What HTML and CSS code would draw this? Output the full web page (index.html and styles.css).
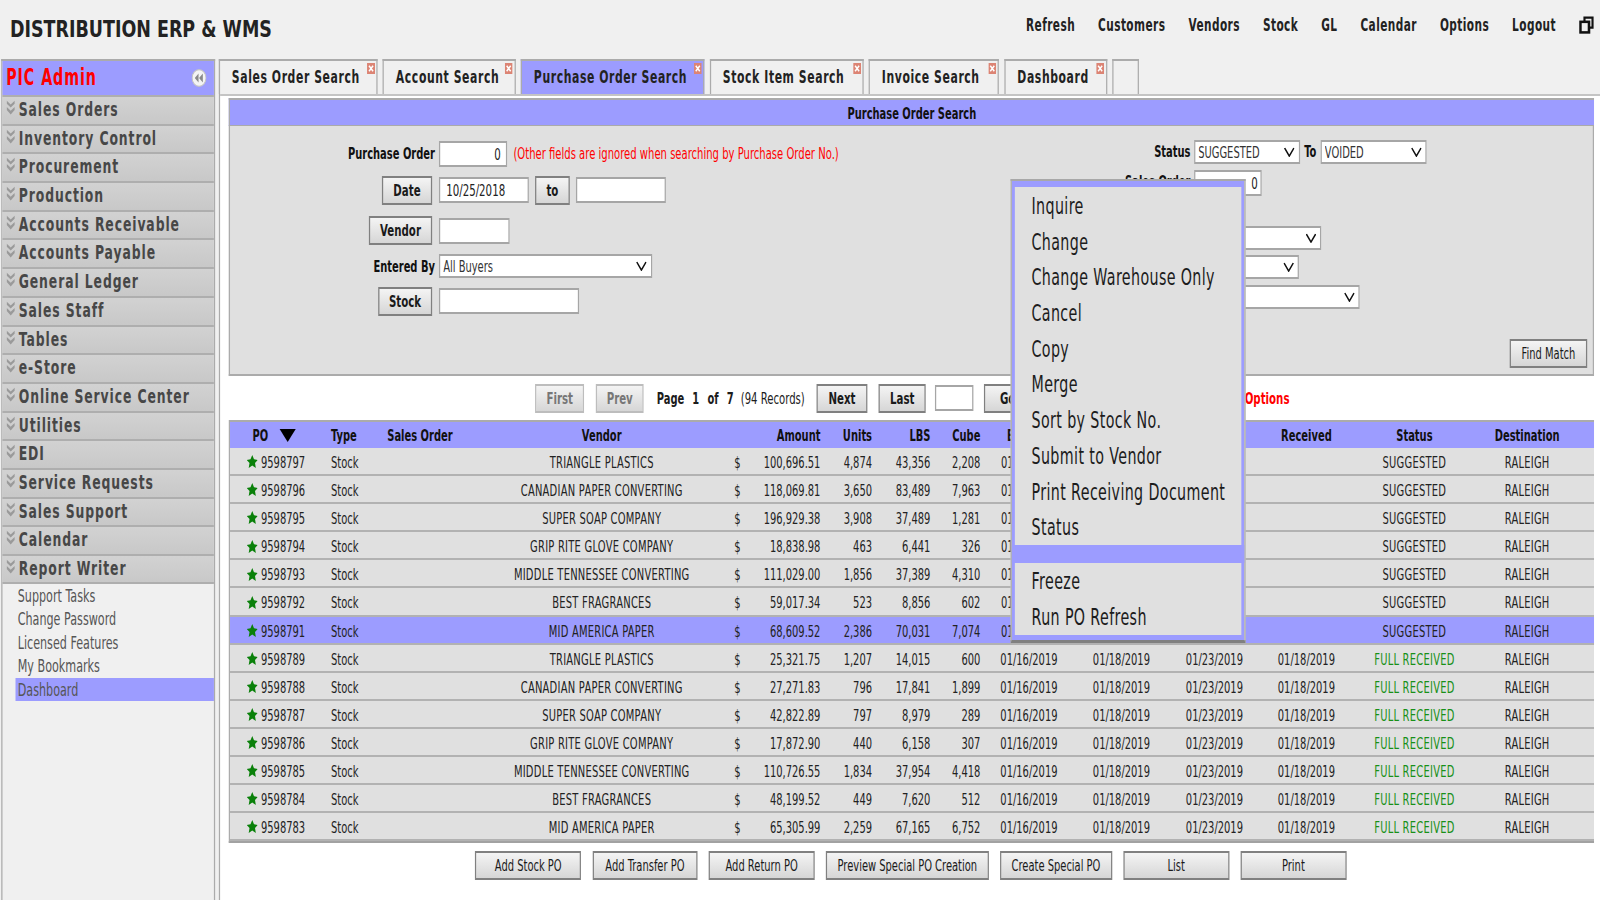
FILE: index.html
```html
<!DOCTYPE html>
<html lang="en">
<head>
<meta charset="utf-8">
<title>Distribution ERP &amp; WMS</title>
<link rel="stylesheet" href="styles.css">
</head>
<body>
<svg class="defs" aria-hidden="true">
  <symbol id="star" viewBox="0 0 20 20" preserveAspectRatio="none"><polygon points="10,0 13.200,6.500 20,7.500 15,12.300 16.500,20 10,16 3.500,20 5,12.300 0,7.500 6.800,6.500" fill="#0a800a"/></symbol>
  <symbol id="chev" viewBox="0 0 16 24" preserveAspectRatio="none"><path d="M1 1l7 6 7-6v5l-7 6-7-6zM1 11l7 6 7-6v5l-7 7-7-7z" fill="#9a9a9a"/></symbol>
  <symbol id="close" viewBox="0 0 16 20" preserveAspectRatio="none"><rect width="16" height="20" fill="#dc8474"/><path d="M4 5l8 10M12 5L4 15" stroke="#fff" stroke-width="3"/></symbol>
</svg>
<div class="frame">
<div class="page">
  <header class="top">
    <div class="brand">DISTRIBUTION ERP &amp; WMS</div>
    <nav class="nav">
      <a>Refresh</a><a>Customers</a><a>Vendors</a><a>Stock</a><a>GL</a><a>Calendar</a><a>Options</a><a>Logout</a>
      <svg class="restore" viewBox="0 0 14 17" preserveAspectRatio="none"><path d="M5 5V1.500h7.500V11H9" fill="none" stroke="#111" stroke-width="2"/><rect x="1.200" y="5.500" width="8" height="10" fill="none" stroke="#111" stroke-width="2.400"/></svg>
    </nav>
  </header>
  <div class="work">
    <aside class="side">
      <div class="side-head"><span class="side-title">PIC Admin</span>
        <svg class="collapse" viewBox="0 0 14 14" preserveAspectRatio="none"><circle cx="7" cy="7" r="6.500" fill="#f4f4f4" stroke="#c4c4c4"/><path d="M6.500 3.500v7L3 7zM10.500 3.500v7L7 7z" fill="#8a8a8a"/></svg>
      </div>
      <div class="sec"><svg class="chev"><use href="#chev"/></svg>Sales Orders</div>
      <div class="sec"><svg class="chev"><use href="#chev"/></svg>Inventory Control</div>
      <div class="sec"><svg class="chev"><use href="#chev"/></svg>Procurement</div>
      <div class="sec"><svg class="chev"><use href="#chev"/></svg>Production</div>
      <div class="sec"><svg class="chev"><use href="#chev"/></svg>Accounts Receivable</div>
      <div class="sec"><svg class="chev"><use href="#chev"/></svg>Accounts Payable</div>
      <div class="sec"><svg class="chev"><use href="#chev"/></svg>General Ledger</div>
      <div class="sec"><svg class="chev"><use href="#chev"/></svg>Sales Staff</div>
      <div class="sec"><svg class="chev"><use href="#chev"/></svg>Tables</div>
      <div class="sec"><svg class="chev"><use href="#chev"/></svg>e-Store</div>
      <div class="sec"><svg class="chev"><use href="#chev"/></svg>Online Service Center</div>
      <div class="sec"><svg class="chev"><use href="#chev"/></svg>Utilities</div>
      <div class="sec"><svg class="chev"><use href="#chev"/></svg>EDI</div>
      <div class="sec"><svg class="chev"><use href="#chev"/></svg>Service Requests</div>
      <div class="sec"><svg class="chev"><use href="#chev"/></svg>Sales Support</div>
      <div class="sec"><svg class="chev"><use href="#chev"/></svg>Calendar</div>
      <div class="sec"><svg class="chev"><use href="#chev"/></svg>Report Writer</div>
      <ul class="sub">
        <li>Support Tasks</li>
        <li>Change Password</li>
        <li>Licensed Features</li>
        <li>My Bookmarks</li>
        <li class="on">Dashboard</li>
      </ul>
    </aside>
    <main class="main">
      <div class="tabs">
        <div class="tab t1">Sales Order Search<svg class="x"><use href="#close"/></svg></div>
        <div class="tab t2">Account Search<svg class="x"><use href="#close"/></svg></div>
        <div class="tab t3 active">Purchase Order Search<svg class="x"><use href="#close"/></svg></div>
        <div class="tab t4">Stock Item Search<svg class="x"><use href="#close"/></svg></div>
        <div class="tab t5">Invoice Search<svg class="x"><use href="#close"/></svg></div>
        <div class="tab t6">Dashboard<svg class="x"><use href="#close"/></svg></div>
        <div class="tab t7"></div>
      </div>
      <section class="panel">
        <h1 class="panel-title">Purchase Order Search</h1>
        <div class="search">
          <div class="f-left">
            <div class="frow r1"><div class="key"><span class="lbl">Purchase Order</span></div><input class="in i-po" value="0"><span class="note">(Other fields are ignored when searching by Purchase Order No.)</span></div>
            <div class="frow r2"><div class="key"><button class="btn b-date">Date</button></div><input class="in i-date" value="10/25/2018"><button class="btn b-to">to</button><input class="in i-date2"></div>
            <div class="frow r3"><div class="key"><button class="btn b-vendor">Vendor</button></div><input class="in i-vendor"></div>
            <div class="frow r4"><div class="key"><span class="lbl">Entered By</span></div><select class="sel s-buyer"><option>All Buyers</option></select></div>
            <div class="frow r5"><div class="key"><button class="btn b-stock">Stock</button></div><input class="in i-stock"></div>
          </div>
          <div class="f-right">
            <div class="grow g1"><span class="rkey">Status</span><select class="sel s-status"><option>SUGGESTED</option></select><span class="to">To</span><select class="sel s-status"><option>VOIDED</option></select></div>
            <div class="grow g2"><span class="rkey">Sales Order</span><input class="in i-so" value="0"></div>
            <div class="grow g3"><span class="rkey"></span><select class="sel s-a"><option></option></select></div>
            <div class="grow g4"><span class="rkey"></span><select class="sel s-b"><option></option></select></div>
            <div class="grow g5"><span class="rkey"></span><select class="sel s-c"><option></option></select></div>
          </div>
          <button class="btn light b-find">Find Match</button>
        </div>
        <div class="pager">
          <button class="btn dis b-first">First</button>
          <button class="btn dis b-prev">Prev</button>
          <span class="pg">Page&nbsp; 1&nbsp; of&nbsp; 7</span>
          <span class="rec">(94 Records)</span>
          <button class="btn b-next">Next</button>
          <button class="btn b-last">Last</button>
          <input class="in i-page">
          <button class="btn b-go">Go</button>
          <span class="opts">Options</span>
        </div>
        <div class="grid">
          <div class="row head">
            <div class="po">PO<span class="sort"></span></div><div class="ty">Type</div><div class="c so">Sales Order</div><div class="c">Vendor</div><div></div><div class="r">Amount</div><div class="r">Units</div><div class="r">LBS</div><div class="r">Cube</div><div class="c dt">Entered</div><div></div><div></div><div class="c dt">Received</div><div class="c">Status</div><div class="c dest">Destination</div>
          </div>
          <div class="row"><div class="po"><svg class="star"><use href="#star"/></svg>9598797</div><div class="ty">Stock</div><div></div><div class="c">TRIANGLE PLASTICS</div><div class="c">$</div><div class="r">100,696.51</div><div class="r">4,874</div><div class="r">43,356</div><div class="r">2,208</div><div class="cut">01</div><div></div><div></div><div></div><div class="c">SUGGESTED</div><div class="c dest">RALEIGH</div></div>
          <div class="row"><div class="po"><svg class="star"><use href="#star"/></svg>9598796</div><div class="ty">Stock</div><div></div><div class="c">CANADIAN PAPER CONVERTING</div><div class="c">$</div><div class="r">118,069.81</div><div class="r">3,650</div><div class="r">83,489</div><div class="r">7,963</div><div class="cut">01</div><div></div><div></div><div></div><div class="c">SUGGESTED</div><div class="c dest">RALEIGH</div></div>
          <div class="row"><div class="po"><svg class="star"><use href="#star"/></svg>9598795</div><div class="ty">Stock</div><div></div><div class="c">SUPER SOAP COMPANY</div><div class="c">$</div><div class="r">196,929.38</div><div class="r">3,908</div><div class="r">37,489</div><div class="r">1,281</div><div class="cut">01</div><div></div><div></div><div></div><div class="c">SUGGESTED</div><div class="c dest">RALEIGH</div></div>
          <div class="row"><div class="po"><svg class="star"><use href="#star"/></svg>9598794</div><div class="ty">Stock</div><div></div><div class="c">GRIP RITE GLOVE COMPANY</div><div class="c">$</div><div class="r">18,838.98</div><div class="r">463</div><div class="r">6,441</div><div class="r">326</div><div class="cut">01</div><div></div><div></div><div></div><div class="c">SUGGESTED</div><div class="c dest">RALEIGH</div></div>
          <div class="row"><div class="po"><svg class="star"><use href="#star"/></svg>9598793</div><div class="ty">Stock</div><div></div><div class="c">MIDDLE TENNESSEE CONVERTING</div><div class="c">$</div><div class="r">111,029.00</div><div class="r">1,856</div><div class="r">37,389</div><div class="r">4,310</div><div class="cut">01</div><div></div><div></div><div></div><div class="c">SUGGESTED</div><div class="c dest">RALEIGH</div></div>
          <div class="row"><div class="po"><svg class="star"><use href="#star"/></svg>9598792</div><div class="ty">Stock</div><div></div><div class="c">BEST FRAGRANCES</div><div class="c">$</div><div class="r">59,017.34</div><div class="r">523</div><div class="r">8,856</div><div class="r">602</div><div class="cut">01</div><div></div><div></div><div></div><div class="c">SUGGESTED</div><div class="c dest">RALEIGH</div></div>
          <div class="row sel-row"><div class="po"><svg class="star"><use href="#star"/></svg>9598791</div><div class="ty">Stock</div><div></div><div class="c">MID AMERICA PAPER</div><div class="c">$</div><div class="r">68,609.52</div><div class="r">2,386</div><div class="r">70,031</div><div class="r">7,074</div><div class="cut">01</div><div></div><div></div><div></div><div class="c">SUGGESTED</div><div class="c dest">RALEIGH</div></div>
          <div class="row"><div class="po"><svg class="star"><use href="#star"/></svg>9598789</div><div class="ty">Stock</div><div></div><div class="c">TRIANGLE PLASTICS</div><div class="c">$</div><div class="r">25,321.75</div><div class="r">1,207</div><div class="r">14,015</div><div class="r">600</div><div class="c dt">01/16/2019</div><div class="c dt">01/18/2019</div><div class="c dt">01/23/2019</div><div class="c dt">01/18/2019</div><div class="c full">FULL RECEIVED</div><div class="c dest">RALEIGH</div></div>
          <div class="row"><div class="po"><svg class="star"><use href="#star"/></svg>9598788</div><div class="ty">Stock</div><div></div><div class="c">CANADIAN PAPER CONVERTING</div><div class="c">$</div><div class="r">27,271.83</div><div class="r">796</div><div class="r">17,841</div><div class="r">1,899</div><div class="c dt">01/16/2019</div><div class="c dt">01/18/2019</div><div class="c dt">01/23/2019</div><div class="c dt">01/18/2019</div><div class="c full">FULL RECEIVED</div><div class="c dest">RALEIGH</div></div>
          <div class="row"><div class="po"><svg class="star"><use href="#star"/></svg>9598787</div><div class="ty">Stock</div><div></div><div class="c">SUPER SOAP COMPANY</div><div class="c">$</div><div class="r">42,822.89</div><div class="r">797</div><div class="r">8,979</div><div class="r">289</div><div class="c dt">01/16/2019</div><div class="c dt">01/18/2019</div><div class="c dt">01/23/2019</div><div class="c dt">01/18/2019</div><div class="c full">FULL RECEIVED</div><div class="c dest">RALEIGH</div></div>
          <div class="row"><div class="po"><svg class="star"><use href="#star"/></svg>9598786</div><div class="ty">Stock</div><div></div><div class="c">GRIP RITE GLOVE COMPANY</div><div class="c">$</div><div class="r">17,872.90</div><div class="r">440</div><div class="r">6,158</div><div class="r">307</div><div class="c dt">01/16/2019</div><div class="c dt">01/18/2019</div><div class="c dt">01/23/2019</div><div class="c dt">01/18/2019</div><div class="c full">FULL RECEIVED</div><div class="c dest">RALEIGH</div></div>
          <div class="row"><div class="po"><svg class="star"><use href="#star"/></svg>9598785</div><div class="ty">Stock</div><div></div><div class="c">MIDDLE TENNESSEE CONVERTING</div><div class="c">$</div><div class="r">110,726.55</div><div class="r">1,834</div><div class="r">37,954</div><div class="r">4,418</div><div class="c dt">01/16/2019</div><div class="c dt">01/18/2019</div><div class="c dt">01/23/2019</div><div class="c dt">01/18/2019</div><div class="c full">FULL RECEIVED</div><div class="c dest">RALEIGH</div></div>
          <div class="row"><div class="po"><svg class="star"><use href="#star"/></svg>9598784</div><div class="ty">Stock</div><div></div><div class="c">BEST FRAGRANCES</div><div class="c">$</div><div class="r">48,199.52</div><div class="r">449</div><div class="r">7,620</div><div class="r">512</div><div class="c dt">01/16/2019</div><div class="c dt">01/18/2019</div><div class="c dt">01/23/2019</div><div class="c dt">01/18/2019</div><div class="c full">FULL RECEIVED</div><div class="c dest">RALEIGH</div></div>
          <div class="row"><div class="po"><svg class="star"><use href="#star"/></svg>9598783</div><div class="ty">Stock</div><div></div><div class="c">MID AMERICA PAPER</div><div class="c">$</div><div class="r">65,305.99</div><div class="r">2,259</div><div class="r">67,165</div><div class="r">6,752</div><div class="c dt">01/16/2019</div><div class="c dt">01/18/2019</div><div class="c dt">01/23/2019</div><div class="c dt">01/18/2019</div><div class="c full">FULL RECEIVED</div><div class="c dest">RALEIGH</div></div>
        </div>
        <div class="actions">
          <button class="btn plain a1">Add Stock PO</button>
          <button class="btn plain a2">Add Transfer PO</button>
          <button class="btn plain a3">Add Return PO</button>
          <button class="btn plain a4">Preview Special PO Creation</button>
          <button class="btn plain a5">Create Special PO</button>
          <button class="btn plain a6">List</button>
          <button class="btn plain a6">Print</button>
        </div>
      </section>
    </main>
  </div>
  <ul class="menu">
    <li>Inquire</li>
    <li>Change</li>
    <li>Change Warehouse Only</li>
    <li>Cancel</li>
    <li>Copy</li>
    <li>Merge</li>
    <li>Sort by Stock No.</li>
    <li>Submit to Vendor</li>
    <li>Print Receiving Document</li>
    <li>Status</li>
    <li class="sep"></li>
    <li class="low">Freeze</li>
    <li class="low">Run PO Refresh</li>
  </ul>
</div>
</div>
</body>
</html>
```

FILE: styles.css
```css
/* The reference is a horizontally squeezed capture. The page is laid out at a wider
   width and compressed once at the root; --u is one final horizontal pixel. */
:root {
  --s: 0.62;
  --u: calc(1px / 0.62);
  --b: calc(1.6 * var(--u));
  --purple: #9c9cff;
  --line: #ababab;
  --panel: #e0e0e0;
  --pale: #f0f0f0;
}
* { box-sizing: border-box; }
html, body { margin: 0; height: 100%; overflow: hidden; background: #fff; }
.defs { display: none; }
.frame { width: 1600px; height: 900px; overflow: hidden; }
.page {
  position: relative;
  width: calc(1600 * var(--u));
  height: 900px;
  transform: scaleX(var(--s));
  transform-origin: 0 0;
  background: var(--pale);
  font-family: "DejaVu Sans", "Liberation Sans", sans-serif;
  font-size: 16px;
  color: #1c1c1c;
  overflow: hidden;
}

/* top bar */
.top { height: 59px; display: flex; justify-content: space-between; padding: 0 calc(6 * var(--u)) 0 calc(10 * var(--u)); }
.brand { font-size: 23.500px; font-weight: 700; line-height: 58px; color: #222; transform: scaleX(1.2); transform-origin: 0 0; white-space: nowrap; }
.nav { display: flex; gap: calc(23 * var(--u)); font-size: 17px; letter-spacing: 0.7px; font-weight: 700; line-height: 50px; color: #222; }
.restore { width: calc(15 * var(--u)); height: 18px; margin-top: 16px; }

/* sidebar */
.work { display: flex; height: 841px; }
.side {
  width: calc(214 * var(--u));
  margin-left: var(--u);
  border-left: var(--b) solid var(--line);
  border-right: var(--b) solid var(--line);
  border-top: 2px solid var(--line);
  flex: none;
}
.side-head {
  height: 34px;
  background: var(--purple);
  display: flex;
  align-items: center;
  justify-content: space-between;
  padding: 0 calc(7 * var(--u)) 2px calc(4 * var(--u));
}
.side-title { color: #f00; font-weight: 700; font-size: 23px; letter-spacing: 1.500px; }
.collapse { width: calc(15 * var(--u)); height: 18px; margin-top: 2px; }
.sec {
  height: 28.700px;
  background: linear-gradient(#d2d2d2, #c8c8c8);
  border-top: 2px solid #aeaeae;
  padding-left: calc(4 * var(--u));
  font-size: 20px;
  letter-spacing: 1.450px;
  font-weight: 700;
  line-height: 25px;
  color: #474747;
  display: flex;
  white-space: nowrap;
}
.chev { width: calc(9 * var(--u)); height: 15px; margin: 3px calc(3.500 * var(--u)) 0 0; flex: none; }
.sub { list-style: none; margin: -1px 0 0; padding: 0 0 0 calc(13 * var(--u)); border-top: 2px solid #aeaeae; color: #555; font-size: 18px; }
.sub li { height: 23.500px; line-height: 23.500px; padding-left: calc(2.500 * var(--u)); }
.sub .on { background: var(--purple); }

/* main + tabs */
.main { flex: 1; margin-left: calc(4 * var(--u)); border-left: var(--b) solid var(--line); background: #fff; min-width: 0; }
.tabs { display: flex; gap: calc(5 * var(--u)); height: 37px; border-bottom: 2px solid #c4c4c4; background: var(--pale); }
.tab {
  position: relative;
  height: 35px;
  border: var(--b) solid var(--line);
  border-width: 2px var(--b) 0;
  padding-left: calc(12 * var(--u));
  font-size: 17.500px;
  letter-spacing: 0.95px;
  font-weight: 700;
  line-height: 33px;
  color: #222;
  white-space: nowrap;
}
.t1 { width: calc(159 * var(--u)); margin-left: calc(-1.600 * var(--u)); }
.t2 { width: calc(133 * var(--u)); }
.t3 { width: calc(184 * var(--u)); }
.t4 { width: calc(154 * var(--u)); }
.t5 { width: calc(130.500 * var(--u)); }
.t6 { width: calc(103 * var(--u)); }
.t7 { width: calc(27 * var(--u)); }
.active { background: var(--purple); }
.x { position: absolute; top: 2px; right: calc(1.500 * var(--u)); width: calc(8 * var(--u)); height: 11px; }

/* panel */
.panel { width: calc(1365 * var(--u)); margin: 2px 0 0 calc(8.500 * var(--u)); }
.panel-title {
  margin: 0;
  height: 28px;
  background: var(--purple);
  border-top: 2px solid var(--line);
  border-left: var(--b) solid var(--line);
  border-bottom: 1px solid #aaa;
  text-align: center;
  font-size: 16px;
  font-weight: 700;
  line-height: 28px;
  color: #111;
}
.search {
  height: 250px;
  display: flex;
  background: var(--panel);
  border: var(--b) solid var(--line);
  border-width: 0 var(--b) 2px;
  padding-top: 15px;
}
.f-left { width: calc(869 * var(--u)); flex: none; }
.frow { display: flex; align-items: flex-start; }
.r1 { height: 35px; }
.r2 { height: 40px; }
.r3 { height: 38px; }
.r4 { height: 33px; }
.r5 { height: 30px; }
.key { width: calc(202 * var(--u)); margin-right: calc(7 * var(--u)); display: flex; justify-content: flex-end; flex: none; }
.lbl { font-size: 16px; font-weight: 700; line-height: 26px; margin-right: calc(-3 * var(--u)); color: #111; white-space: nowrap; }
.in {
  display: block;
  height: 26px;
  padding: 0 calc(5 * var(--u));
  background: #fff;
  border: 2px solid #a6a6a6;
  border-width: 2px var(--b);
  border-radius: 0;
  outline: 0;
  font: 16.500px "DejaVu Sans", sans-serif;
  color: #222;
}
.i-po { width: calc(68 * var(--u)); text-align: right; }
.note { color: #f00; font-size: 16.200px; line-height: 26px; margin-left: calc(6.500 * var(--u)); white-space: nowrap; }
.i-date { width: calc(90 * var(--u)); margin-top: 1px; padding-left: calc(6 * var(--u)); }
.i-date2 { width: calc(90 * var(--u)); margin-top: 1px; }
.i-vendor { width: calc(70.500 * var(--u)); margin-top: 2px; }
.i-stock { width: calc(140 * var(--u)); margin-top: 1px; }
.sel {
  display: block;
  height: 24px;
  appearance: none;
  background: #fff url("data:image/svg+xml,%3Csvg xmlns='http://www.w3.org/2000/svg' viewBox='0 0 10 10' preserveAspectRatio='none'%3E%3Cpath d='M.6 1L5 9l4.400-8' fill='none' stroke='%23111' stroke-width='1.500'/%3E%3C/svg%3E") no-repeat right calc(4 * var(--u)) center / calc(10.500 * var(--u)) 10px;
  border: 2px solid #a6a6a6;
  border-width: 2px var(--b);
  border-radius: 0;
  font: 16px "DejaVu Sans", sans-serif;
  color: #333;
  padding: 0 0 0 calc(3 * var(--u));
}
.s-buyer { width: calc(213 * var(--u)); }
.f-right { width: calc(340 * var(--u)); flex: none; margin-top: -1px; }
.grow { display: flex; align-items: flex-start; }
.g1 { height: 30px; }
.g2 { height: 56px; }
.g3 { height: 29px; }
.g4 { height: 30px; }
.g5 { height: 24px; }
.rkey { width: calc(95 * var(--u)); padding-right: calc(3.500 * var(--u)); flex: none; text-align: right; font-size: 16px; font-weight: 700; line-height: 24px; color: #111; white-space: nowrap; }
.s-status { width: calc(106 * var(--u)); flex: none; }
.to { font-size: 16px; font-weight: 700; line-height: 24px; width: calc(20.700 * var(--u)); flex: none; text-align: center; color: #111; }
.i-so { width: calc(68 * var(--u)); text-align: right; padding-right: calc(3 * var(--u)); }
.s-a { width: calc(127.500 * var(--u)); flex: none; }
.s-b { width: calc(105 * var(--u)); flex: none; }
.s-c { width: calc(166 * var(--u)); flex: none; }
.btn {
  display: block;
  height: 29px;
  padding: 0;
  background: linear-gradient(#f4f4f4, #d6d6d6);
  border: 2px solid #808080;
  border-width: 2px var(--b);
  border-radius: 0;
  font: 700 16.500px "DejaVu Sans", sans-serif;
  color: #1a1a1a;
  white-space: nowrap;
}
.light, .plain { font-weight: 400; font-size: 16px; }
.b-date { width: calc(50 * var(--u)); }
.b-to { width: calc(35 * var(--u)); margin: 0 calc(6 * var(--u)) 0 calc(6 * var(--u)); }
.b-vendor { width: calc(63 * var(--u)); }
.b-stock { width: calc(54 * var(--u)); }
.b-find { width: calc(77 * var(--u)); flex: none; margin: 198px 0 0 calc(71 * var(--u)); }

/* pager */
.pager { height: 44px; display: flex; align-items: center; padding-left: calc(306.500 * var(--u)); background: #fff; }
.dis { color: #777; border-color: #bdbdbd; }
.b-first { width: calc(49 * var(--u)); }
.b-prev { width: calc(48 * var(--u)); margin-left: calc(11.500 * var(--u)); }
.pg { font-weight: 700; font-size: 16px; word-spacing: 1px; margin-left: calc(13 * var(--u)); width: calc(84 * var(--u)); white-space: nowrap; }
.rec { font-size: 16.300px; width: calc(76 * var(--u)); white-space: nowrap; }
.b-next { width: calc(50.500 * var(--u)); }
.b-last { width: calc(47 * var(--u)); margin-left: calc(11.500 * var(--u)); }
.i-page { width: calc(39 * var(--u)); margin-left: calc(9 * var(--u)); }
.b-go { width: calc(48 * var(--u)); margin-left: calc(10 * var(--u)); }
.opts { color: #f00; font-weight: 700; font-size: 16.500px; margin-left: calc(213 * var(--u)); }

/* results */
.grid { border-left: var(--b) solid var(--line); border-bottom: 2px solid #a2a2a2; }
.row {
  display: grid;
  grid-template-columns: calc(96 * var(--u)) calc(43 * var(--u)) calc(104 * var(--u)) calc(257.500 * var(--u)) calc(14 * var(--u)) calc(77 * var(--u)) calc(51.600 * var(--u)) calc(58.400 * var(--u)) calc(50 * var(--u)) calc(97 * var(--u)) calc(88 * var(--u)) calc(98 * var(--u)) calc(86 * var(--u)) calc(128 * var(--u)) calc(114.900 * var(--u));
  height: 28.100px;
  background: var(--panel);
  border-bottom: 2px solid #b2b2b2;
  font-size: 16px;
  line-height: 29.500px;
  white-space: nowrap;
  color: #222;
}
.row > :nth-child(4), .row > :nth-child(14), .row > :nth-child(15) { letter-spacing: 0.4px; }
.head { background: var(--purple); font-weight: 700; border-top: 2px solid var(--line); border-bottom: 0; height: 28px; color: #111; line-height: 27px; }
.head > :nth-child(n) { letter-spacing: 0; }
.sel-row { background: var(--purple); }
.po { display: flex; align-items: center; padding-left: calc(17 * var(--u)); }
.head .po { padding-left: calc(22.500 * var(--u)); }
.ty { padding-left: calc(5 * var(--u)); }
.so { padding-right: calc(2 * var(--u)); }
.c { text-align: center; }
.r { text-align: right; padding-right: calc(1 * var(--u)); }
.dt { padding-right: calc(2 * var(--u)); }
.cut { padding-left: calc(19.500 * var(--u)); }
.dest { padding-right: calc(17.400 * var(--u)); }
.full { color: #189018; }
.star { width: calc(11 * var(--u)); height: 13px; margin: 0 calc(3 * var(--u)) 2px 0; flex: none; }
.sort { width: 0; height: 0; margin-left: calc(11.600 * var(--u)); border-style: solid; border-color: #000 transparent transparent; border-width: 13px calc(8.500 * var(--u)) 0; }

/* action buttons */
.actions { display: flex; padding: 8px 0 0 calc(246.500 * var(--u)); background: #fff; gap: calc(11.200 * var(--u)); }
.a1 { width: calc(106 * var(--u)); }
.a2 { width: calc(105 * var(--u)); }
.a3 { width: calc(106 * var(--u)); }
.a4 { width: calc(163 * var(--u)); }
.a5 { width: calc(112 * var(--u)); }
.a6 { width: calc(106 * var(--u)); }

/* context menu */
.menu {
  position: absolute;
  left: calc(1010.300 * var(--u));
  top: 179px;
  width: calc(235.400 * var(--u));
  margin: 0;
  list-style: none;
  background: var(--panel);
  border: 2px solid #a8a8a8;
  border-width: 2px calc(1.500 * var(--u));
  border-bottom: 3px solid #808080;
  box-shadow: inset 0 6px 0 var(--purple), inset calc(3 * var(--u)) 0 0 var(--purple), inset calc(-3 * var(--u)) 0 0 var(--purple), inset 0 -5px 0 var(--purple);
  padding: 7px calc(3 * var(--u)) 5px;
  font-size: 23px;
  letter-spacing: 0.6px;
  color: #1c1c1c;
}
.menu li { height: 35.700px; line-height: 37px; padding-left: calc(17 * var(--u)); white-space: nowrap; }
.menu .sep { height: 18px; background: var(--purple); margin: 0 calc(-3 * var(--u)); }
.menu .low { height: 36px; }
```
